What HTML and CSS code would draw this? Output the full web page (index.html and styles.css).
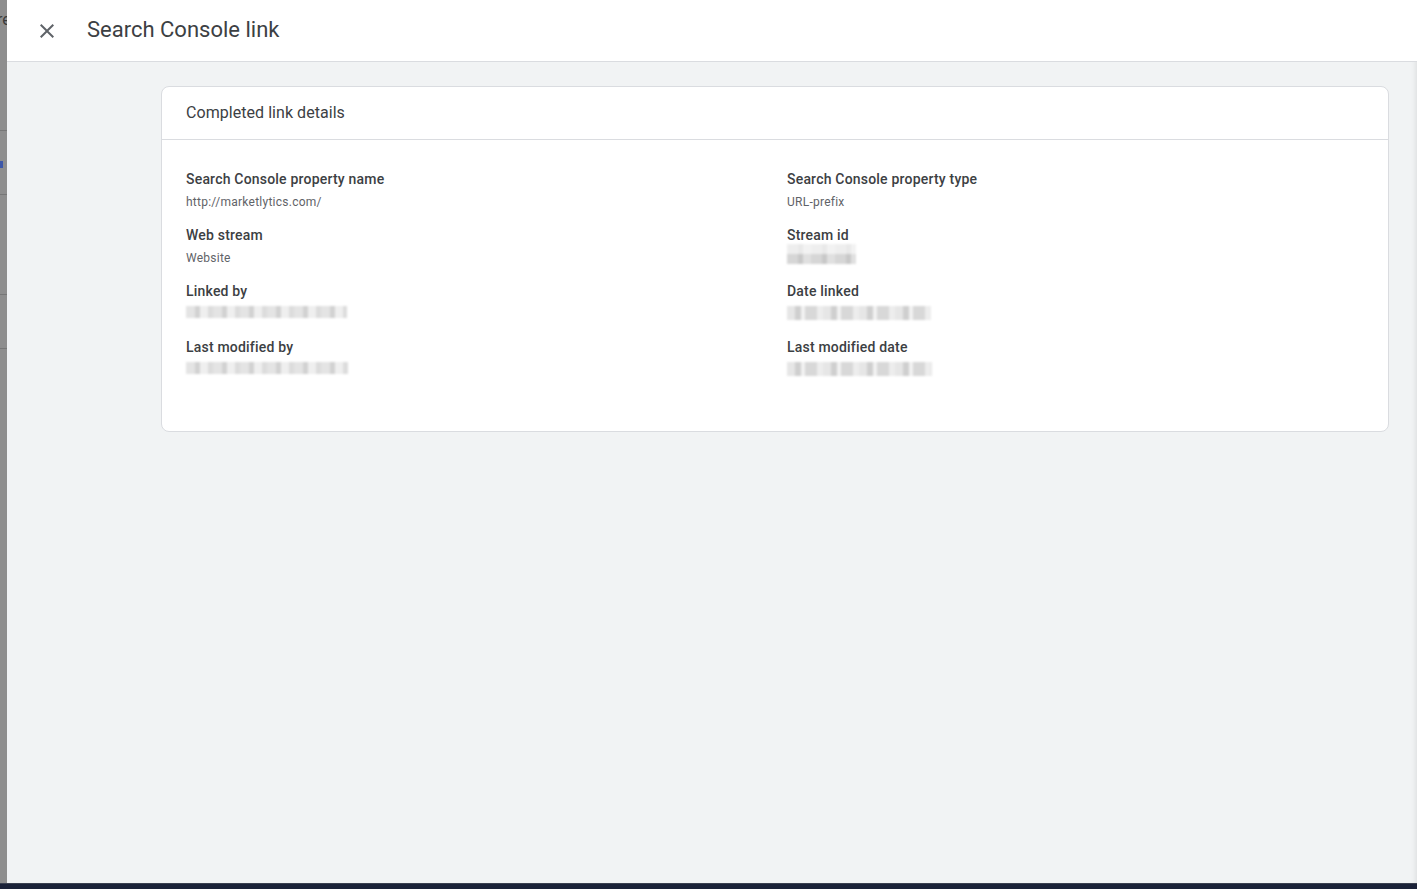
FILE: index.html
```html
<!DOCTYPE html>
<html lang="en">
  <head>
    <title>Search Console link</title>
    <meta name="viewport" content="width=device-width, initial-scale=1.0" />
    <link rel="stylesheet" href="styles.css">
  </head>

  <body>
    <div class="screen">
      <!-- page behind the dialog, only a sliver shows -->
      <div class="backdrop">
        <span class="backdrop-text">re</span>
        <div class="backdrop-row"></div>
        <div class="backdrop-row tall"><i class="backdrop-mark"></i></div>
        <div class="backdrop-row taller"></div>
        <div class="backdrop-row"></div>
      </div>

      <div class="panel">
        <header class="panel-header">
          <button class="close" aria-label="Close">
            <svg viewBox="0 0 24 24" width="24" height="24">
              <path fill="currentColor" d="M19 6.41L17.59 5 12 10.59 6.41 5 5 6.41 10.59 12 5 17.59 6.41 19 12 13.41 17.59 19 19 17.59 13.41 12z"/>
            </svg>
          </button>
          <h1>Search Console link</h1>
        </header>

        <main class="panel-body">
          <section class="card">
            <h2 class="card-title">Completed link details</h2>
            <div class="details">
              <div class="field">
                <div class="field-label">Search Console property name</div>
                <div class="field-value">http://marketlytics.com/</div>
              </div>
              <div class="field">
                <div class="field-label">Search Console property type</div>
                <div class="field-value">URL-prefix</div>
              </div>
              <div class="field">
                <div class="field-label">Web stream</div>
                <div class="field-value">Website</div>
              </div>
              <div class="field">
                <div class="field-label">Stream id</div>
                <div class="field-value"><span class="redacted stream" style="width: 69px"></span></div>
              </div>
              <div class="field">
                <div class="field-label">Linked by</div>
                <div class="field-value"><span class="redacted" style="width: 161px"></span></div>
              </div>
              <div class="field">
                <div class="field-label">Date linked</div>
                <div class="field-value"><span class="redacted date" style="width: 144px"></span></div>
              </div>
              <div class="field">
                <div class="field-label">Last modified by</div>
                <div class="field-value"><span class="redacted" style="width: 162px"></span></div>
              </div>
              <div class="field">
                <div class="field-label">Last modified date</div>
                <div class="field-value"><span class="redacted date" style="width: 145px"></span></div>
              </div>
            </div>
          </section>
        </main>
      </div>
    </div>
    <div class="taskbar"></div>
  </body>
</html>
```

FILE: styles.css
```css
body {
  font-family: Roboto, 'Liberation Sans', Arial, sans-serif;
  margin: 0;
  height: 889px;
  overflow: hidden;
  display: flex;
  flex-direction: column;
  color: #202124;
}
.screen {
  flex: 1;
  display: flex;
  min-height: 0;
}
.taskbar {
  height: 5px;
  background: #1b2238;
  border-top: 1px solid #3b4150;
}

/* backdrop sliver */
.backdrop {
  width: 7px;
  background: #8e8e8e;
  display: flex;
  flex-direction: column;
  overflow: hidden;
}
.backdrop-text {
  font-size: 16px;
  color: #3a3a3a;
  margin: 12px 0 0 -3px;
  line-height: 16px;
  height: 65px;
  flex: none;
}
.backdrop-row {
  height: 53px;
  border-bottom: 1px solid #777;
  flex: none;
}
.backdrop-row.tall {
  height: 63px;
  position: relative;
}
.backdrop-row.taller {
  height: 99px;
}
.backdrop-mark {
  position: absolute;
  left: 0;
  top: 30px;
  width: 3px;
  height: 7px;
  background: #3d57a8;
}

/* dialog panel */
.panel {
  flex: 1;
  display: flex;
  flex-direction: column;
  background: #f1f3f4;
  min-width: 0;
}
.panel-header {
  flex: none;
  display: flex;
  align-items: center;
  background: #fff;
  border-bottom: 1px solid #dadce0;
  box-sizing: border-box;
  height: 62px;
}
.close {
  border: none;
  background: none;
  padding: 0;
  margin: 0 0 0 28px;
  width: 24px;
  height: 24px;
  color: #5f6368;
  cursor: pointer;
}
.close svg {
  display: block;
}
.panel-header h1 {
  margin: 0 0 2px 28px;
  font-size: 22px;
  font-weight: 400;
  color: #3c4043;
}
.panel-body {
  flex: 1;
  padding: 24px 28px 0 154px;
  box-shadow: inset -6px 0 6px -6px rgba(0, 0, 0, 0.12);
}

/* card */
.card {
  background: #fff;
  border: 1px solid #dadce0;
  border-radius: 8px;
}
.card-title {
  margin: 0;
  font-size: 16px;
  font-weight: 400;
  color: #3c4043;
  letter-spacing: 0.05px;
  line-height: 20px;
  padding: 16px 24px 16px;
  border-bottom: 1px solid #dadce0;
}
.details {
  display: grid;
  grid-template-columns: 601px 1fr;
  padding: 29px 24px 38px;
}
.field {
  margin-bottom: 15px;
}
.field-label {
  font-size: 14px;
  font-weight: 500;
  line-height: 20px;
  letter-spacing: 0.2px;
  color: #3c4043;
}
.field-value {
  font-size: 12px;
  line-height: 16px;
  letter-spacing: 0.25px;
  margin-top: 5px;
  color: #5f6368;
  height: 16px;
}

/* blurred personal data */
.redacted {
  display: block;
  height: 12px;
  margin-top: 2px;
  filter: blur(1.2px);
  background:
    repeating-linear-gradient(90deg, #e4e4e4 0 9px, #d2d2d2 9px 14px, #efefef 14px 22px, #dcdcdc 22px 27px);
}
.redacted.stream {
  height: 20px;
  margin-top: -6px;
  background:
    linear-gradient(rgba(255, 255, 255, 0.6) 0 10px, transparent 10px),
    repeating-linear-gradient(90deg, #d6d6d6 0 11px, #c8c8c8 11px 16px, #e0e0e0 16px 24px);
}
.redacted.date {
  height: 14px;
  margin-top: 1px;
  background:
    repeating-linear-gradient(90deg, #e6e6e6 0 8px, #cfcfcf 8px 14px, #f2f2f2 14px 18px, #d8d8d8 18px 30px, #ededed 30px 36px);
}
```
